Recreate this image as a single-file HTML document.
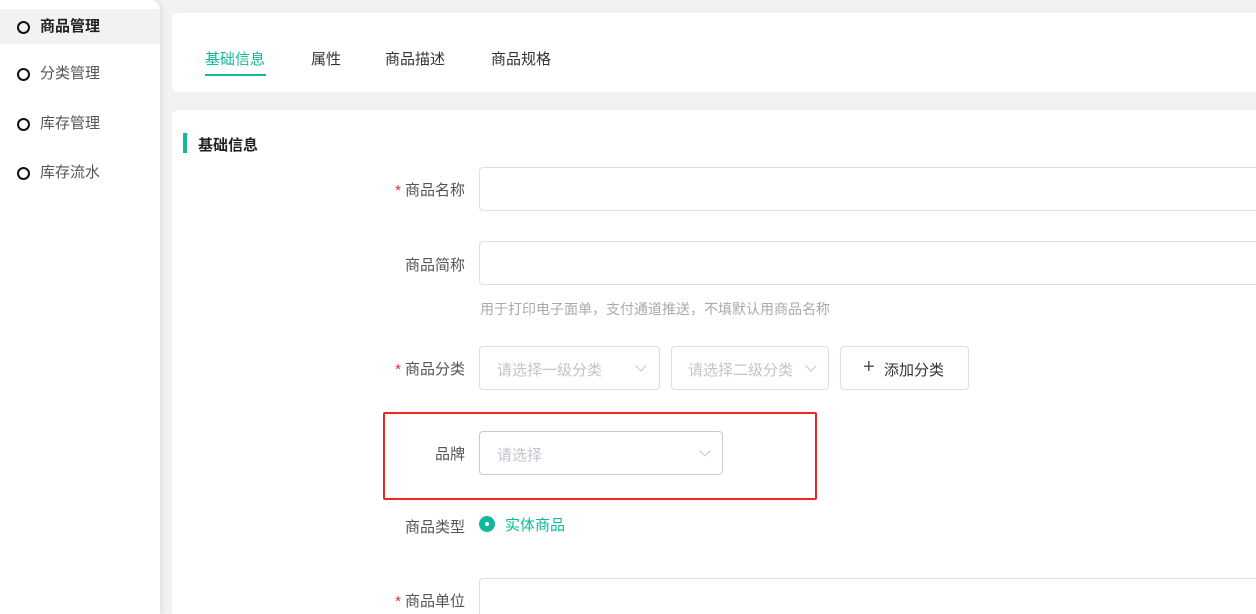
<html style="margin:0;width:1256px;height:614px;overflow:hidden"><head><style>
body{margin:0;width:1256px;height:614px;background:#f2f2f2;font-family:"Liberation Sans","Noto Sans CJK SC",sans-serif;position:relative;overflow:hidden;font-size:15px;color:#333}
.a{position:absolute}
.side{left:0;top:0;width:160px;height:614px;background:#fff;box-shadow:2px 0 6px rgba(0,0,0,.08);border-top-right-radius:10px}
.it{left:0;width:160px;height:32px;line-height:32px;font-size:15px;color:#555}
.it i{position:absolute;left:17px;top:10px;width:9px;height:9px;border:2px solid #111;border-radius:50%}
.it span{position:absolute;left:40px}
.card{background:#fff;border-radius:6px}
.lab{width:100px;text-align:right;left:365px;color:#555}
.lab b{color:#f5222d;font-weight:normal;margin-right:4px}
.in{border:1px solid #dcdfe6;border-radius:4px;background:#fff;box-sizing:border-box}
.ph{color:#c0c4cc}
.chev{position:absolute;width:7px;height:7px;border-right:1px solid #c0c4cc;border-bottom:1px solid #c0c4cc;transform:rotate(45deg)}
</style></head><body>
<div class="a side"></div>
<div class="a it" style="top:9px;height:35px;line-height:35px;background:#f2f2f3;color:#222;font-weight:bold"><i style="top:12px"></i><span>商品管理</span></div>
<div class="a it" style="top:58px"><i></i><span>分类管理</span></div>
<div class="a it" style="top:108px"><i></i><span>库存管理</span></div>
<div class="a it" style="top:157px"><i></i><span>库存流水</span></div>

<div class="a card" style="left:172px;top:13px;width:1100px;height:79px"></div>
<div class="a" style="left:205px;top:48px;color:#10b99a">基础信息</div>
<div class="a" style="left:205px;top:74px;width:61px;height:2px;background:#10b99a"></div>
<div class="a" style="left:311px;top:48px;color:#333">属性</div>
<div class="a" style="left:385px;top:48px;color:#333">商品描述</div>
<div class="a" style="left:491px;top:48px;color:#333">商品规格</div>

<div class="a card" style="left:172px;top:110px;width:1100px;height:520px"></div>
<div class="a" style="left:183px;top:133px;width:4px;height:20px;background:#10b99a"></div>
<div class="a" style="left:198px;top:134px;font-weight:bold;color:#222">基础信息</div>

<div class="a lab" style="top:179px"><b>*</b>商品名称</div>
<div class="a in" style="left:479px;top:167px;width:800px;height:44px"></div>
<div class="a lab" style="top:254px">商品简称</div>
<div class="a in" style="left:479px;top:241px;width:800px;height:44px"></div>
<div class="a" style="left:480px;top:299px;color:#aaa;font-size:14px">用于打印电子面单，支付通道推送，不填默认用商品名称</div>

<div class="a lab" style="top:358px"><b>*</b>商品分类</div>
<div class="a in" style="left:479px;top:346px;width:181px;height:44px"><span class="a ph" style="left:17px;top:12px">请选择一级分类</span><span class="chev" style="left:157px;top:15px"></span></div>
<div class="a in" style="left:671px;top:346px;width:158px;height:44px"><span class="a ph" style="left:16px;top:12px">请选择二级分类</span><span class="chev" style="left:135px;top:15px"></span></div>
<div class="a in" style="left:840px;top:346px;width:129px;height:44px"><span class="a" style="left:22px;top:9px;font-size:20px;color:#555">+</span><span class="a" style="left:43px;top:12px;color:#333">添加分类</span></div>

<div class="a" style="left:383px;top:412px;width:434px;height:88px;border:2px solid #f2261d;box-sizing:border-box;border-radius:2px"></div>
<div class="a lab" style="top:443px">品牌</div>
<div class="a in" style="left:479px;top:431px;width:244px;height:44px;border-color:#c8cad0"><span class="a ph" style="left:17px;top:12px">请选择</span><span class="chev" style="left:221px;top:15px"></span></div>

<div class="a lab" style="top:516px">商品类型</div>
<div class="a" style="left:479px;top:516px;width:16px;height:16px;border-radius:50%;background:#10b99a"></div>
<div class="a" style="left:485px;top:522px;width:4px;height:4px;border-radius:50%;background:#fff"></div>
<div class="a" style="left:505px;top:514px;color:#10b99a">实体商品</div>

<div class="a lab" style="top:590px"><b>*</b>商品单位</div>
<div class="a in" style="left:479px;top:578px;width:800px;height:44px"></div>
</body></html>
